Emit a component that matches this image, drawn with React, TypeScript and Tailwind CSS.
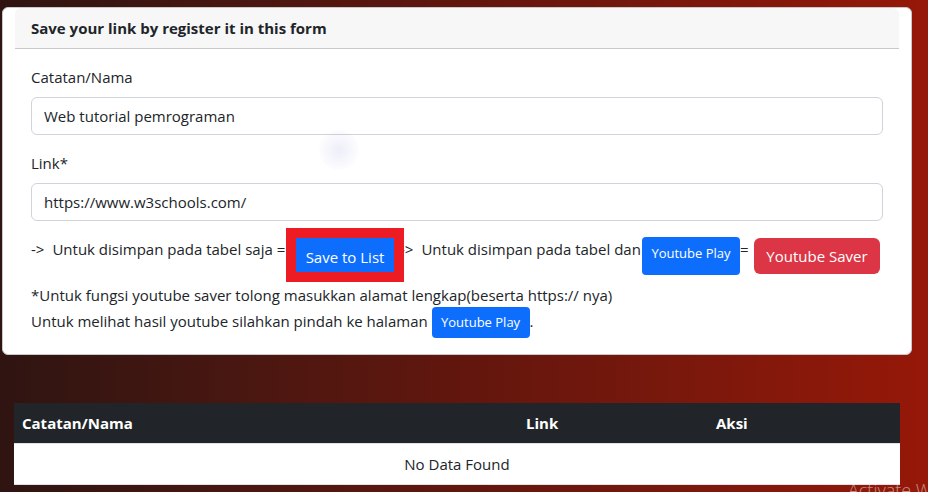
import React, { useState } from "react";

type FieldProps = {
  id: string;
  label: string;
  value: string;
  onChange: (value: string) => void;
};

function Field({ id, label, value, onChange }: FieldProps) {
  return (
    <div className="mb-4">
      <label htmlFor={id} className="mb-2 block">
        {label}
      </label>
      <input
        id={id}
        type="text"
        value={value}
        onChange={(event) => onChange(event.target.value)}
        className="block h-[38px] w-full rounded-md border border-[#ced4da] bg-white px-3 text-[#212529] outline-none"
      />
    </div>
  );
}

export default function App() {
  const [name, setName] = useState("Web tutorial pemrograman");
  const [link, setLink] = useState("https://www.w3schools.com/");

  return (
    <div className="relative h-screen overflow-hidden bg-linear-to-r from-[#2f1411] via-[#62160d] to-[#961808] pt-[7px] pr-4 pl-[2px] font-['Open_Sans','Noto_Sans',sans-serif] text-[15px] leading-6 text-[#212529]">
      <section className="relative rounded-md border border-[#c8c9ca] bg-white px-3 pb-4">
        <h1 className="rounded-t-md border-b border-[#c8c9ca] bg-[#f7f7f7] px-4 py-2 font-bold">
          Save your link by register it in this form
        </h1>
        <form className="px-4 pt-4" onSubmit={(event) => event.preventDefault()}>
          <Field id="name" label="Catatan/Nama" value={name} onChange={setName} />
          <Field id="link" label="Link*" value={link} onChange={setLink} />
          <div className="flex h-[38px] items-start whitespace-nowrap">
            <span className="flex w-[265px] gap-2">
              <span>-&gt;</span>
              <span>Untuk disimpan pada tabel saja =</span>
            </span>
            <button
              type="submit"
              className="relative z-10 mt-px h-[34px] w-[98px] bg-[#0d6efd] pt-1 text-white ring-[10px] ring-[#ed1c24]"
            >
              Save to List
            </button>
            <span className="flex w-[248px] gap-2 pl-1.5">
              <span>-&gt;</span>
              <span>Untuk disimpan pada tabel dan</span>
            </span>
            <a
              href="#play"
              className="h-[38px] w-[98px] rounded bg-[#0d6efd] pt-1 text-center text-[13px] text-white"
            >
              Youtube Play
            </a>
            <span className="w-[14px]">=</span>
            <button type="button" className="mt-px h-9 w-[126px] rounded-md bg-[#dc3545] text-white">
              Youtube Saver
            </button>
          </div>
          <p className="mt-2">
            *Untuk fungsi youtube saver tolong masukkan alamat lengkap(beserta https:// nya)
            <br />
            Untuk melihat hasil youtube silahkan pindah ke halaman{" "}
            <a
              href="#play"
              className="inline-block h-[31px] w-[98px] rounded bg-[#0d6efd] text-center text-[13px] leading-[31px] text-white"
            >
              Youtube Play
            </a>
            .
          </p>
        </form>
        <div className="pointer-events-none absolute top-[122px] left-[316px] size-10 rounded-full bg-radial from-[#5c64c81c] to-[#5c64c800] to-80%" />
      </section>

      <table className="mt-12 ml-3 w-[calc(100%-24px)] table-fixed border-collapse text-left">
        <thead className="bg-[#212529] text-white">
          <tr className="h-10 border-b border-[#dee2e6]">
            <th className="w-[504px] px-2">Catatan/Nama</th>
            <th className="w-[190px] px-2">Link</th>
            <th className="px-2">Aksi</th>
          </tr>
        </thead>
        <tbody className="bg-white">
          <tr className="h-[41px] border-b border-[#dee2e6]">
            <td colSpan={3} className="text-center">
              No Data Found
            </td>
          </tr>
        </tbody>
      </table>

      <div className="pointer-events-none absolute top-[476px] left-[calc(100%-80px)] text-lg leading-7 font-light whitespace-nowrap text-white/50">
        Activate Windows
      </div>
    </div>
  );
}
